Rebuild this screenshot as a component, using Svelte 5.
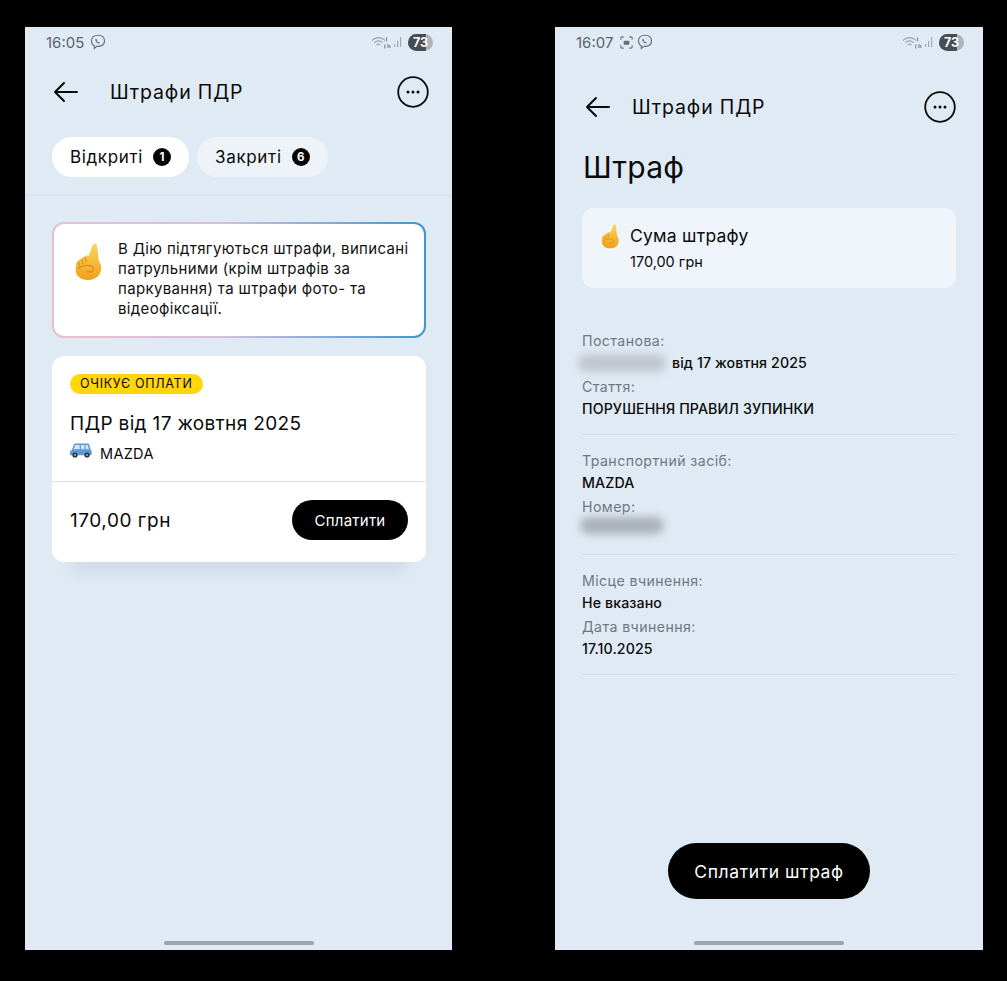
<script>
  const groups = [
    [
      { label: 'Постанова:', value: 'від 17 жовтня 2025', hidden: 'inline' },
      { label: 'Стаття:', value: 'ПОРУШЕННЯ ПРАВИЛ ЗУПИНКИ' }
    ],
    [
      { label: 'Транспортний засіб:', value: 'MAZDA' },
      { label: 'Номер:', value: '', hidden: 'full' }
    ],
    [
      { label: 'Місце вчинення:', value: 'Не вказано' },
      { label: 'Дата вчинення:', value: '17.10.2025' }
    ]
  ];
</script>

{#snippet viber()}
  <svg class="sicon" width="16" height="16" viewBox="0 0 16 16" fill="none" stroke="#666d75" stroke-width="1.1">
    <path d="M8 1.200c-4 0-6.500 1.900-6.500 5.700 0 2.400 1 4 2.800 4.900v2.700l2.400-2.200c3.500.3 7.800-.6 7.800-5.400 0-3.800-2.500-5.700-6.500-5.700z" />
    <path d="M5.800 4.800c-.8.500-.6 1.600.2 2.800s1.900 2 2.900 1.900c.7-.1 1-.8.8-1.100l-1-.6-.6.4c-.6-.2-1.100-.8-1.300-1.400l.4-.6-.6-1z" fill="#666d75" stroke="none" />
  </svg>
{/snippet}

{#snippet status(time, shot)}
  <div class="status">
    <span class="time">{time}</span>
    {#if shot}
      <svg class="sicon" width="15" height="15" viewBox="0 0 16 16" fill="none" stroke="#666d75" stroke-width="1.200">
        <path d="M2 5V3.200C2 2.500 2.500 2 3.200 2H5M11 2h1.800c.7 0 1.200.5 1.200 1.200V5M14 11v1.800c0 .7-.5 1.200-1.200 1.200H11M5 14H3.200C2.500 14 2 13.500 2 12.800V11" />
        <rect x="5" y="6" width="6" height="4.500" rx="1" fill="#666d75" stroke="none" />
      </svg>
    {/if}
    {@render viber()}
    <div class="sys">
      <svg width="20" height="13" viewBox="0 0 20 13" fill="none" stroke="#7d858d" stroke-width="1">
        <path d="M1 4.500C5 .8 10 .8 14 4.500M3.200 6.700c2.800-2.400 5.800-2.400 8.600 0M5.400 8.900c1.500-1.200 2.800-1.200 4.200 0" />
        <path d="M15.500 1.500v4M13.800 8.500v4M17 8v4M18.800 9v3" stroke-width="1.100" />
      </svg>
      <svg width="9" height="12" viewBox="0 0 9 12" fill="#a2a9b0">
        <rect x="0" y="8" width="1.200" height="3" />
        <rect x="3" y="5" width="1.200" height="6" />
        <rect x="6" y="1" width="1.200" height="10" />
      </svg>
      <span class="batt"><span class="batt-fill"></span><b>73</b></span>
    </div>
  </div>
{/snippet}

{#snippet header()}
  <svg class="arrow" width="26" height="22" viewBox="0 0 26 22" fill="none" stroke="#0a0a0a" stroke-width="2" stroke-linecap="round" stroke-linejoin="round">
    <path d="M24 11H2M11 2l-9 9 9 9" />
  </svg>
{/snippet}

{#snippet more()}
  <svg class="more" width="32" height="32" viewBox="0 0 32 32" fill="none">
    <circle cx="16" cy="16" r="14.800" stroke="#0a0a0a" stroke-width="1.800" />
    <circle cx="11" cy="16" r="1.500" fill="#0a0a0a" />
    <circle cx="16" cy="16" r="1.500" fill="#0a0a0a" />
    <circle cx="21" cy="16" r="1.500" fill="#0a0a0a" />
  </svg>
{/snippet}

{#snippet finger(w, h)}
  <svg width={w} height={h} viewBox="0 0 30 38">
    <defs>
      <linearGradient id="hand" x1="0" y1="0" x2="0" y2="1">
        <stop offset="0" stop-color="#fbd75e" />
        <stop offset="1" stop-color="#f0a018" />
      </linearGradient>
    </defs>
    <path d="M19.500 2.200C20.200.6 23-.2 24 2l1.800 16c2 2.500 2.700 5.500 2.200 8.800C27.300 33 22 37 15 37 8 37 2.500 33 2.500 26.500c0-1.800.3-3.500.7-5-.3-1.500.7-3 2.300-3.400.3-1.400 1.700-2.400 3.200-2.300.4-1.300 1.800-2.200 3.300-2 .6-1.200 2.300-1.800 3.800-1z" fill="url(#hand)" />
    <path d="M5.500 18.100 6.500 23M8.700 15.800 10 21M12 13.800 13.500 19.500" stroke="#d98b17" stroke-width="1" fill="none" />
    <path d="M5 25.500c4-3 10-4 14-2 2 1 2 4 0 5-2 .8-4 .5-6 0" stroke="#d98b17" stroke-width="1.200" fill="none" />
  </svg>
{/snippet}

{#snippet car()}
  <svg width="22" height="15" viewBox="0 0 22 15">
    <path d="M4 1.500C4.300.7 5 .4 5.800.4h11.500c1 0 1.700.5 2 1.400l1.400 5c.7.600 1 1.300 1 2.200v2.200c0 .6-.4 1-1 1H1c-.6 0-1-.4-1-1V9.500C0 8.400.7 7.500 1.800 7z" fill="#5b9bd8" />
    <path d="M5.400 2h4.300v4.200H3.700zM11 2h3.400v4.200H11zM15.600 2h2.200l1.100 4.200h-3.300z" fill="#d7e6f3" />
    <circle cx="5" cy="12" r="2.600" fill="#2b3440" />
    <circle cx="5" cy="12" r="1" fill="#aab4bf" />
    <circle cx="17" cy="12" r="2.600" fill="#2b3440" />
    <circle cx="17" cy="12" r="1" fill="#aab4bf" />
  </svg>
{/snippet}

<div class="page">
  <section class="phone">
    {@render status('16:05', false)}
    <div class="bar left-bar">
      {@render header()}
      <span class="bar-title">Штрафи ПДР</span>
      {@render more()}
    </div>
    <div class="tabs">
      <div class="tab active">Відкриті <span class="count">1</span></div>
      <div class="tab">Закриті <span class="count">6</span></div>
    </div>
    <div class="tabs-line"></div>

    <div class="notice">
      <div class="notice-inner">
        <span class="notice-icon">{@render finger(30, 38)}</span>
        <p>В Дію підтягуються штрафи, виписані патрульними (крім штрафів за паркування) та штрафи фото- та відеофіксації.</p>
      </div>
    </div>

    <div class="card">
      <div class="card-top">
        <span class="pill">ОЧІКУЄ ОПЛАТИ</span>
        <h2>ПДР від 17 жовтня 2025</h2>
        <div class="car">{@render car()}<span>MAZDA</span></div>
      </div>
      <div class="card-bottom">
        <span class="price">170,00 грн</span>
        <span class="btn small">Сплатити</span>
      </div>
    </div>

    <div class="home"></div>
  </section>

  <section class="phone">
    {@render status('16:07', true)}
    <div class="bar right-bar">
      {@render header()}
      <span class="bar-title">Штрафи ПДР</span>
      {@render more()}
    </div>
    <h1>Штраф</h1>

    <div class="sum">
      <span class="sum-icon">{@render finger(20, 25)}</span>
      <div>
        <div class="sum-title">Сума штрафу</div>
        <div class="sum-value">170,00 грн</div>
      </div>
    </div>

    <div class="details">
      {#each groups as group}
        <div class="group">
          {#each group as row}
            <div class="row">
              <div class="label">{row.label}</div>
              <div class="value">
                {#if row.hidden === 'full'}<span class="cover"></span>{/if}
                {#if row.hidden}<span class="blur" class:full={row.hidden === 'full'}></span>{/if}{row.value}
              </div>
            </div>
          {/each}
        </div>
      {/each}
    </div>

    <div class="pay"><span class="btn big">Сплатити штраф</span></div>
    <div class="home"></div>
  </section>
</div>

<style>
  :global(body) { margin: 0; background: #000; }
  .page {
    box-sizing: border-box;
    width: 1007px;
    height: 981px;
    background: #000;
    padding: 27px 0 0 25px;
    display: flex;
    gap: 103px;
    font-family: Inter, "Noto Sans", sans-serif;
    color: #0a0a0a;
  }
  .phone {
    width: 427px;
    height: 923px;
    background: #e0eaf4;
    display: flex;
    flex-direction: column;
    position: relative;
    overflow: hidden;
  }
  .phone + .phone { width: 428px; }
  .status {
    height: 30px;
    padding: 0 19px 0 21px;
    display: flex;
    align-items: center;
    gap: 6px;
    flex: none;
  }
  .time { font-size: 15px; color: #5b636b; }
  .sicon { flex: none; }
  .sicon + .sicon { margin-left: -3px; }
  .sys { margin-left: auto; display: flex; align-items: center; gap: 1px; }
  .sys svg:first-child { margin-right: 2px; }
  .batt {
    position: relative;
    width: 25px;
    height: 17px;
    margin-left: 4px;
    border-radius: 9px;
    background: #aeb4ba;
    overflow: hidden;
    display: flex;
    align-items: center;
    justify-content: center;
  }
  .batt-fill { position: absolute; left: 0; top: 0; bottom: 0; width: 73%; background: #474c52; }
  .batt b { position: relative; color: #fff; font-size: 12.500px; font-weight: 700; }
  .bar { display: flex; align-items: center; flex: none; height: 40px; }
  .left-bar { margin-top: 15px; padding: 0 23px 0 28px; }
  .left-bar .bar-title { margin-left: 31px; }
  .right-bar { margin-top: 30px; padding: 0 27px 0 30px; }
  .right-bar .bar-title { margin-left: 21px; }
  .arrow { flex: none; }
  .more { margin-left: auto; flex: none; }
  .bar-title { font-size: 19.500px; letter-spacing: 0.85px; }
  .tabs { display: flex; gap: 8px; margin: 25px 0 0 27px; flex: none; }
  .tab {
    height: 40px;
    padding: 0 18px;
    border-radius: 20px;
    background: #edf3f8;
    display: flex;
    align-items: center;
    gap: 10px;
    font-size: 17px;
    letter-spacing: 0.65px;
    line-height: 38px;
  }
  .tab.active { background: #fff; }
  .count {
    width: 18px;
    height: 18px;
    border-radius: 50%;
    background: #050505;
    color: #fff;
    font-size: 11.500px;
    font-weight: 700;
    letter-spacing: 0;
    line-height: 18px;
    display: flex;
    align-items: center;
    justify-content: center;
  }
  .tabs-line { height: 2px; background: #d5e3ee; margin-top: 17px; flex: none; }
  .notice {
    margin: 26px 26px 0 27px;
    height: 116px;
    flex: none;
    box-sizing: border-box;
    padding: 2px;
    border-radius: 12px;
    background: linear-gradient(90deg, #eabfca 0%, #d5bfdc 45%, #3f97d0 100%);
  }
  .notice-inner {
    height: 100%;
    box-sizing: border-box;
    background: #fff;
    border-radius: 10px;
    padding: 15px 12px 0 19px;
    display: flex;
  }
  .notice-icon { flex: none; width: 45px; margin-top: 4px; }
  .notice p { margin: 0; font-size: 15px; line-height: 20px; letter-spacing: 0.35px; color: #111; }
  .card {
    margin: 18px 26px 0 27px;
    height: 206px;
    flex: none;
    background: #fff;
    border-radius: 12px;
    box-shadow: 0 32px 12px -20px rgba(120, 145, 170, 0.15);
    display: flex;
    flex-direction: column;
  }
  .card-top { padding: 18px 18px 0; height: 126px; box-sizing: border-box; border-bottom: 1px solid #d9e0ea; flex: none; }
  .pill {
    display: inline-block;
    height: 20px;
    line-height: 20px;
    padding: 0 10px;
    border-radius: 10px;
    background: #ffd60a;
    font-size: 12.500px;
    letter-spacing: 0.7px;
    vertical-align: top;
  }
  h2 { margin: 18px 0 0; font-size: 19px; font-weight: 400; line-height: 24px; letter-spacing: 0.35px; }
  .car { display: flex; align-items: center; gap: 8px; margin-top: 7px; font-size: 14.500px; letter-spacing: 0.3px; height: 20px; }
  .car svg { margin-top: -5px; }
  .card-bottom { display: flex; align-items: center; justify-content: space-between; padding: 0 18px; flex: 1; margin-top: -4px; }
  .price { font-size: 19px; letter-spacing: 0.55px; }
  .btn {
    background: #000;
    color: #fff;
    display: flex;
    align-items: center;
    justify-content: center;
  }
  .btn.small { width: 116px; height: 40px; border-radius: 20px; font-size: 15px; letter-spacing: 0.25px; }
  .btn.big { width: 202px; height: 56px; border-radius: 28px; font-size: 17.500px; letter-spacing: 0.6px; }
  h1 { margin: 22px 0 0 28px; font-size: 30px; font-weight: 400; line-height: 36px; letter-spacing: 0.3px; flex: none; }
  .sum {
    margin: 23px 27px 0;
    height: 80px;
    flex: none;
    box-sizing: border-box;
    border-radius: 12px;
    background: #eff5fa;
    padding: 16px 0 0 18px;
    display: flex;
  }
  .sum-icon { width: 30px; flex: none; }
  .sum-title { font-size: 17.500px; line-height: 24px; letter-spacing: 0.25px; }
  .sum-value { font-size: 14.500px; line-height: 18px; margin-top: 5px; }
  .details { margin: 43px 27px 0; flex: none; }
  .group { border-bottom: 1px solid #c9dcec; padding-bottom: 15px; margin-bottom: 16px; }
  .row { margin-bottom: 4px; }
  .row:last-child { margin-bottom: 0; }
  .label { font-size: 14.200px; line-height: 21px; letter-spacing: 0.4px; color: #6f7780; margin-top: -1px; padding-bottom: 1px; }
  .value { font-size: 14.200px; font-weight: 500; line-height: 21px; letter-spacing: 0.1px; position: relative; min-height: 21px; }
  .blur {
    display: inline-block;
    vertical-align: middle;
    width: 88px;
    height: 18px;
    margin: -2px 6px 0 -4px;
    border-radius: 9px;
    background: #bfc6cf;
    filter: blur(4px);
  }
  .blur.full {
    display: block;
    position: absolute;
    left: -2px;
    top: -1px;
    width: 84px;
    height: 17px;
    margin: 0;
    background: #a9b0b8;
  }
  .cover {
    position: absolute;
    left: 0;
    top: -2px;
    width: 60px;
    height: 6px;
    background: #e0eaf4;
  }
  .pay { position: absolute; left: 0; right: 0; top: 816px; display: flex; justify-content: center; }
  .home {
    position: absolute;
    left: 139px;
    top: 914px;
    width: 150px;
    height: 4px;
    border-radius: 2px;
    background: #9aa3ae;
  }
</style>
